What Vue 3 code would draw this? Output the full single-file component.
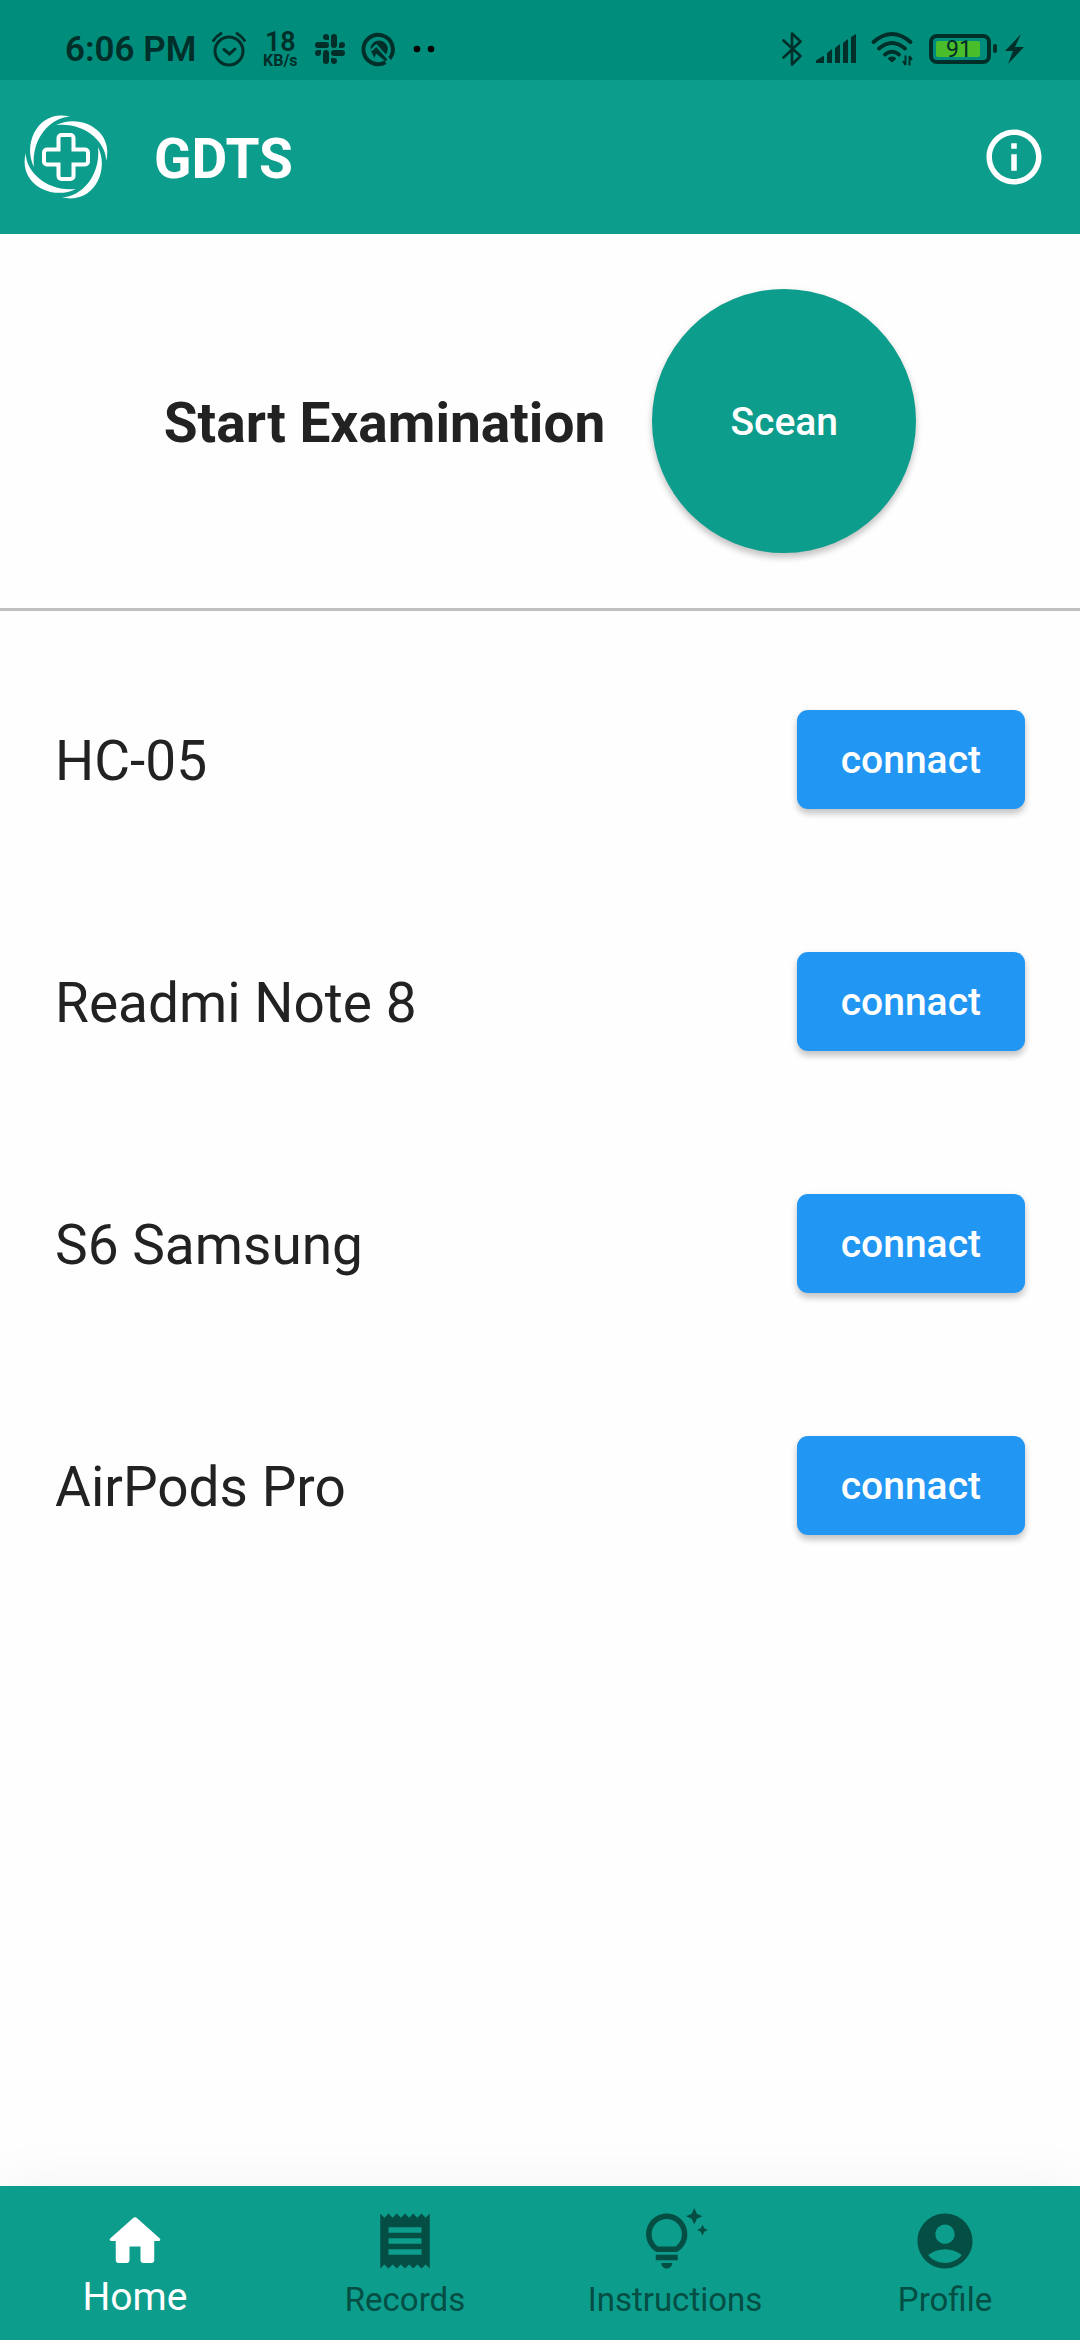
<script setup>
import { ref } from 'vue'

const devices = ['HC-05', 'Readmi Note 8', 'S6 Samsung', 'AirPods Pro']

const tabs = [
  {
    label: 'Home',
    icon: 'M10 19v-5h4v5c0 .55.45 1 1 1h3c.55 0 1-.45 1-1v-7h1.7c.46 0 .68-.57.33-.87L12.67 3.6c-.38-.34-.96-.34-1.34 0l-8.36 7.53c-.34.3-.13.87.33.87H5v7c0 .55.45 1 1 1h3c.55 0 1-.45 1-1z',
  },
  {
    label: 'Records',
    icon: 'M18 17H6v-2h12v2zm0-4H6v-2h12v2zm0-4H6V7h12v2zM3 22l1.5-1.5L6 22l1.5-1.5L9 22l1.5-1.5L12 22l1.5-1.5L15 22l1.5-1.5L18 22l1.5-1.5L21 22V2l-1.5 1.5L18 2l-1.5 1.5L15 2l-1.5 1.5L12 2l-1.5 1.5L9 2 7.5 3.5 6 2 4.5 3.5 3 2v20z',
  },
  {
    label: 'Instructions',
    icon: 'M7 20h4c0 1.1-.9 2-2 2s-2-.9-2-2zM5 19h8v-2H5v2zM16.5 9.5c0 3.82-2.66 5.86-3.77 6.5H5.27C4.16 15.36 1.5 13.32 1.5 9.5 1.5 5.36 4.86 2 9 2s7.5 3.36 7.5 7.5zM14.5 9.5C14.5 6.47 12.03 4 9 4S3.5 6.47 3.5 9.5c0 2.47 1.49 3.89 2.35 4.5h6.3c.86-.61 2.35-2.03 2.35-4.5zM21.37 7.37 20 8l1.37.63L22 10l.63-1.37L24 8l-1.37-.63L22 6l-.63 1.37zM19 6l.94-2.06L22 3l-2.06-.94L19 0l-.94 2.06L16 3l2.06.94L19 6z',
  },
  {
    label: 'Profile',
    icon: 'M12 2C6.48 2 2 6.48 2 12s4.48 10 10 10 10-4.48 10-10S17.52 2 12 2zM12 6c1.93 0 3.5 1.57 3.5 3.5S13.93 13 12 13s-3.5-1.57-3.5-3.5S10.07 6 12 6zM12 20c-2.03 0-4.43-.82-6.14-2.88C7.55 15.8 9.68 15 12 15s4.45.8 6.14 2.12C16.43 19.18 14.03 20 12 20z',
  },
]

const active = ref('Home')
</script>

<template>
  <div class="screen">
    <div class="status">
      <div class="status-side">
        <span class="clock">6:06 PM</span>
        <svg width="34" height="36" viewBox="0 0 34 36" fill="none" stroke="currentColor" stroke-width="3" stroke-linecap="round">
          <circle cx="17" cy="20" r="14" />
          <path d="M12 18.5l5.5 4.5 5.5-5M1.5 9.5q3-4.5 7.5-7M32.5 9.5q-3-4.5-7.5-7" />
        </svg>
        <span class="speed"><b>18</b><small>KB/s</small></span>
        <svg width="32" height="32" viewBox="0 0 32 32" fill="currentColor">
          <g v-for="turn in [0, 90, 180, 270]" :key="turn" :transform="`rotate(${turn} 16 16)`">
            <rect x="17" y="1" width="6" height="14" rx="3" />
            <path d="M9 4a3 3 0 0 1 6 0v3h-3a3 3 0 0 1-3-3z" />
          </g>
        </svg>
        <svg width="34" height="34" viewBox="0 0 34 34">
          <path d="M27.5 26.8A14.7 14.7 0 1 0 23.5 30.2" fill="none" stroke="currentColor" stroke-width="4" />
          <path d="M8.5 15.5a8.8 8.8 0 0 1 17.2 0c.3 3-.7 6-2.7 8.2L13 12.5 9 18z" fill="currentColor" />
          <path d="M9 19l5-4.5 11.5 13-2 1.8-9.5-7.8-1.5 4.5z" fill="currentColor" />
          <path d="M9.5 18.3l5-4.8 13 14.5" fill="none" stroke="#008d7c" stroke-width="2" />
        </svg>
        <svg width="20" height="8" viewBox="0 0 20 8" class="dots">
          <circle cx="5" cy="4" r="3.3" /><circle cx="19" cy="4" r="3.3" />
        </svg>
      </div>
      <div class="status-side radios">
        <svg width="18" height="36" viewBox="1 0 18 36" fill="none" stroke="currentColor" stroke-width="2.6" stroke-linejoin="round" stroke-linecap="round">
          <path d="M1.5 9.5l17 15.5-8.5 8.5V2.5L18.5 10.5 1.5 26.5" />
        </svg>
        <svg width="40" height="30" viewBox="0 0 40 30" fill="currentColor">
          <path d="M0 26.5l7-4.5q1 0 1 1v6H0zM11 19l5-4v14h-5zM19 14l5-4v19h-5zM27 9l5-4v24h-5zM35 3l5-3v29h-5z" />
        </svg>
        <svg width="42" height="34" viewBox="0 0 42 34" fill="none" stroke="currentColor" stroke-width="4" stroke-linecap="round">
          <path d="M2.5 10Q21-6 39.5 10M8 16.5q13-11 26 0M14 22.5q7-5.5 14 0" />
          <path d="M21 24.5q4 0 4 2.5L21 30.5 17 27q0-2.5 4-2.5z" fill="currentColor" stroke="none" />
          <path d="M34.5 23.5v9.5M34.5 33l-2.5-4M38.5 33.5V24M38.5 24l2.5 4" stroke-width="2" stroke-linecap="butt" />
        </svg>
        <svg width="96" height="32" viewBox="0 0 96 32" fill="currentColor">
          <rect x="3" y="3" width="58" height="26" rx="6" fill="none" stroke="currentColor" stroke-width="4" />
          <rect x="8" y="8" width="44" height="16" rx="2" fill="#4abd2b" />
          <rect x="65" y="11" width="4" height="9" rx="2" />
          <text x="31" y="24" text-anchor="middle" class="charge">91</text>
          <path d="M93 1L77 18h8l-5 13L96 14h-9z" />
        </svg>
      </div>
    </div>

    <header class="appbar">
      <svg width="84" height="84" viewBox="-42 -42 84 84">
        <g fill="currentColor">
          <path
            v-for="turn in [0, 90, 180, 270]"
            :key="turn"
            :transform="`rotate(${turn})`"
            d="M-32 10C-44-14-27-48 4-40.3-15-40-35-19-32 10z"
          />
        </g>
        <path
          d="M-4.5-22h9a3 3 0 0 1 3 3v11.500H19a3 3 0 0 1 3 3v9a3 3 0 0 1-3 3H7.500V19a3 3 0 0 1-3 3h-9a3 3 0 0 1-3-3V7.500H-19a3 3 0 0 1-3-3v-9a3 3 0 0 1 3-3H-7.500V-19a3 3 0 0 1 3-3z"
          fill="none" stroke="currentColor" stroke-width="4"
        />
      </svg>
      <h1>GDTS</h1>
      <button type="button" aria-label="About">
        <svg width="66" height="66" viewBox="0 0 24 24" fill="currentColor">
          <path d="M11 7h2v2h-2zm0 4h2v6h-2zm1-9C6.48 2 2 6.48 2 12s4.48 10 10 10 10-4.48 10-10S17.52 2 12 2zm0 18c-4.41 0-8-3.59-8-8s3.59-8 8-8 8 3.59 8 8-3.59 8-8 8z" />
        </svg>
      </button>
    </header>

    <section class="exam">
      <h2>Start Examination</h2>
      <button class="scan" type="button">Scean</button>
    </section>

    <main>
      <ul class="devices">
        <li v-for="device in devices" :key="device">
          <span>{{ device }}</span>
          <button class="connect" type="button">connact</button>
        </li>
      </ul>
    </main>

    <nav class="tabs">
      <button
        v-for="tab in tabs"
        :key="tab.label"
        type="button"
        :class="{ active: tab.label === active }"
        @click="active = tab.label"
      >
        <svg width="66" height="66" viewBox="0 0 24 24" fill="currentColor" fill-rule="evenodd">
          <path :d="tab.icon" />
        </svg>
        <span>{{ tab.label }}</span>
      </button>
    </nav>
  </div>
</template>

<style>
body {
  margin: 0;
  background: #fefefe;
}
</style>

<style scoped>
.screen {
  display: flex;
  flex-direction: column;
  min-height: 100vh;
  overflow: hidden;
  font-family: Roboto, sans-serif;
  color: #222;
}
button {
  border: 0;
  padding: 0;
  background: none;
  font: inherit;
  color: inherit;
  cursor: pointer;
}
svg {
  display: block;
  flex: none;
  overflow: visible;
}
h1,
h2 {
  margin: 0;
  padding-top: 3px;
  font-size: 55px;
  line-height: 64px;
  font-weight: 700;
}
.status {
  display: flex;
  justify-content: space-between;
  height: 62px;
  padding: 18px 56px 0 65px;
  background: #008d7c;
  color: #002e28;
}
.status-side {
  display: flex;
  align-items: center;
  gap: 16px;
}
.radios {
  gap: 15px;
}
.clock {
  padding-top: 2px;
  font-size: 35px;
  line-height: 40px;
  font-weight: 600;
}
.speed {
  display: flex;
  flex-direction: column;
  align-items: center;
  width: 36px;
}
.speed b {
  font-size: 27px;
  line-height: 24px;
  font-weight: 600;
}
.speed small {
  font-size: 16px;
  line-height: 14px;
  font-weight: 700;
}
.dots {
  fill: #000;
}
.charge {
  font-size: 23px;
}
.appbar {
  display: flex;
  align-items: center;
  height: 154px;
  padding: 0 33px 0 24px;
  background: #0d9d8c;
  color: #fff;
}
.appbar h1 {
  flex: 1;
  padding-left: 46px;
}
.exam {
  display: flex;
  align-items: center;
  justify-content: center;
  gap: 47px;
  padding: 55px 0;
  border-bottom: 3px solid #bfbfbf;
}
.scan {
  width: 264px;
  height: 264px;
  padding-top: 2px;
  border-radius: 50%;
  background: #0d9d8c;
  color: #fff;
  font-size: 39px;
  font-weight: 500;
  box-shadow: 0 5px 6px rgba(0, 0, 0, 0.18), 0 2px 8px rgba(0, 0, 0, 0.08);
}
main {
  flex: 1;
}
.devices {
  margin: 0;
  padding: 27px 55px;
  list-style: none;
}
.devices li {
  display: flex;
  align-items: center;
  justify-content: space-between;
  height: 242px;
  font-size: 55px;
  line-height: 64px;
}
.devices span {
  padding-top: 3px;
}
.connect {
  padding: 27px 44px 25px;
  border-radius: 11px;
  background: #2296f3;
  color: #fff;
  font-size: 39px;
  line-height: 47px;
  font-weight: 500;
  box-shadow: 0 5px 6px rgba(0, 0, 0, 0.18), 0 2px 8px rgba(0, 0, 0, 0.08);
}
.tabs {
  display: grid;
  grid-template-columns: repeat(4, 1fr);
  height: 154px;
  background: #0d9d8c;
  box-shadow: 0 0 60px rgba(0, 0, 0, 0.05);
}
.tabs button {
  display: flex;
  flex-direction: column;
  align-items: center;
  padding-top: 22px;
  color: #044e44;
  font-size: 33px;
  line-height: 52px;
}
.tabs .active {
  color: #fff;
  font-size: 39px;
  line-height: 46px;
}
</style>
